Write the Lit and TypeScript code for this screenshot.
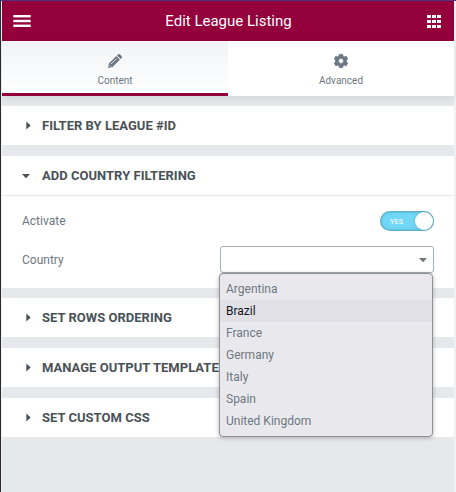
import { LitElement, html, css } from "lit";
import { customElement, property } from "lit/decorators.js";
import { classMap } from "lit/directives/class-map.js";

@customElement("panel-section")
class PanelSection extends LitElement {
  @property() heading = "";
  @property({ type: Boolean }) open = false;

  static styles = css`
    :host { display: block; background: #fff; }
    .head { height: 39px; display: flex; align-items: center; }
    .caret { width: 20px; height: 39px; margin-left: 20px; flex: none; fill: #495157; }
    .title { font-size: 13px; font-weight: 700; color: #495157; white-space: nowrap; line-height: 15px; letter-spacing: 0.02px; }
    .body { border-top: 1px solid #e6e9ec; height: 92px; box-sizing: content-box; }
  `;

  render() {
    return html`
      <div class="head">
        <svg class="caret" viewBox="0 0 20 39">
          <path d=${this.open ? "M0 18h8l-4 4.2z" : "M4.300 15.500v8l4.400-4z"}></path>
        </svg>
        <span class="title">${this.heading}</span>
      </div>
      ${this.open ? html`<div class="body"><slot></slot></div>` : ""}
    `;
  }
}

@customElement("app-root")
class AppRoot extends LitElement {
  private countries = ["Argentina", "Brazil", "France", "Germany", "Italy", "Spain", "United Kingdom"];

  static styles = css`
    :host { display: block; font-family: Roboto, "Liberation Sans", sans-serif; }
    .window {
      width: 456px; height: 492px; box-sizing: border-box; overflow: hidden;
      border-top: 1px solid #56307a; border-left: 1px solid #2b2a33;
      background: #f1f1f3; padding: 0 2px 0 1px;
    }
    .panel { height: 491px; background: #e6e9ec; }
    header {
      height: 40px; background: #93003c; color: #fff; display: flex;
      align-items: center; justify-content: space-between; padding: 0 13px 0 11px;
    }
    .name { font-size: 15px; line-height: 18px; margin-right: 1px; }
    .menu { width: 18px; height: 12px; fill: #fff; }
    .apps { width: 14px; height: 13px; fill: #fff; margin-top: 1px; }
    .tabs { display: flex; height: 55px; box-shadow: 0 2px 9px rgba(0, 0, 0, 0.09); }
    .tab {
      flex: 1; box-sizing: border-box; background: #fff; color: #6d7882; font-size: 10px;
      line-height: 12px; text-align: center; border-bottom: 3px solid #fff; padding-top: 12px;
      display: flex; flex-direction: column; align-items: center;
    }
    .tab svg { width: 16px; height: 16px; fill: #6d7882; margin-bottom: 6px; }
    .tab.active { background: linear-gradient(#f1f3f5, #fff); border-bottom-color: #93003c; }
    .stack { display: flex; flex-direction: column; padding-top: 10px; }
    .wide { margin-top: 11px; }
    .near { margin-top: 10px; }
    .row { display: flex; justify-content: space-between; align-items: center; padding: 0 20px; font-size: 12px; color: #6d7882; }
    .first { height: 20px; padding-top: 15px; }
    .second { height: 27px; padding-top: 15px; }
    .switch {
      width: 54px; height: 20px; border-radius: 10px; background: #71d7f7; box-sizing: border-box;
      box-shadow: inset 0 0 3px 0.5px rgba(0, 0, 0, 0.35); color: #fff; font-size: 7.5px;
      display: flex; align-items: center; justify-content: space-between; padding: 0 1px 0 10px;
    }
    .yes { padding-top: 1px; }
    .knob { width: 18px; height: 18px; border-radius: 50%; background: #fff; box-shadow: 0 0 3px rgba(0, 0, 0, 0.2); }
    .select {
      position: relative; width: 214px; height: 27px; box-sizing: border-box;
      border: 1px solid #a4afb7; border-radius: 3px; background: #fff;
    }
    .arrow { position: absolute; right: 6px; top: 11px; width: 8px; height: 5px; fill: #6d7882; }
    .list {
      position: absolute; left: -2px; top: 26px; width: 214px; height: 164px; box-sizing: border-box;
      border: 1px solid #909095; border-radius: 4px; background: #e9e9ed; padding-top: 4px;
      box-shadow: 0 1px 4px rgba(0, 0, 0, 0.28); z-index: 1;
    }
    .option { height: 22px; line-height: 22px; padding-left: 6px; }
    .option.hover { background: #e0e0e6; color: #15141a; }
  `;

  render() {
    return html`
      <div class="window"><div class="panel">
        <header>
          <svg class="menu" viewBox="0 0 18 12">
            <rect x=".3" y="0" width="17.400" height="2.400"></rect>
            <rect x=".3" y="4.800" width="17.400" height="2.400"></rect>
            <rect x=".3" y="9.600" width="17.400" height="2.400"></rect>
          </svg>
          <span class="name">Edit League Listing</span>
          <svg class="apps" viewBox="0 0 14 13">
            ${[0, 5, 10].map((y) => [0, 5, 10].map((x) => this.dot(x, y)))}
          </svg>
        </header>
        <div class="tabs">
          <div class="tab active">
            <svg viewBox="0 0 16 16">
              <path d="M1 15l.9-4.500L9.300 3.100l3.600 3.600L5.500 14.100zM10 2.400l1-1c.6-.6 1.400-.6 2 0l1.600 1.600c.6.6.6 1.400 0 2l-1 1z"></path>
              <path d="M4 11l5.400-5.400M2.300 12.400l1.300 1.300" stroke="#f5f7f8" stroke-width=".8" fill="none"></path>
            </svg>
            <span>Content</span>
          </div>
          <div class="tab">
            <svg viewBox="0 0 16 16">
              <path fill-rule="evenodd" stroke="#6d7882" stroke-width=".5" stroke-linejoin="round" d="M6.300 1.200h3.400l.4 1.800 1.200.7 1.900-.6 1.700 2.800-1.400 1.250v1.700l1.400 1.250-1.700 2.800-1.900-.6-1.200.7-.4 1.800h-3.400l-.4-1.800-1.200-.7-1.900.6-1.700-2.800 1.400-1.250v-1.700L1.100 5.900l1.700-2.800 1.900.6L5.900 3zM8 5.550a2.450 2.450 0 1 0 0 4.900a2.450 2.450 0 1 0 0-4.900z"></path>
            </svg>
            <span>Advanced</span>
          </div>
        </div>
        <div class="stack">
          <panel-section heading="FILTER BY LEAGUE #ID"></panel-section>
          <panel-section class="wide" heading="ADD COUNTRY FILTERING" open>
            <div class="row first">
              <span>Activate</span>
              <div class="switch"><span class="yes">YES</span><span class="knob"></span></div>
            </div>
            <div class="row second">
              <span>Country</span>
              <div class="select">
                <svg class="arrow" viewBox="0 0 8 5"><path d="M0 0h8L4 4.300z"></path></svg>
                <div class="list">
                  ${this.countries.map((c) => html`<div class=${classMap({ option: true, hover: c === "Brazil" })}>${c}</div>`)}
                </div>
              </div>
            </div>
          </panel-section>
          <panel-section class="near" heading="SET ROWS ORDERING"></panel-section>
          <panel-section class="wide" heading="MANAGE OUTPUT TEMPLATE"></panel-section>
          <panel-section class="wide" heading="SET CUSTOM CSS"></panel-section>
        </div>
      </div></div>
    `;
  }

  private dot(x: number, y: number) {
    return html`<svg x=${x} y=${y} width="4" height="3"><rect width="4" height="3"></rect></svg>`;
  }
}
